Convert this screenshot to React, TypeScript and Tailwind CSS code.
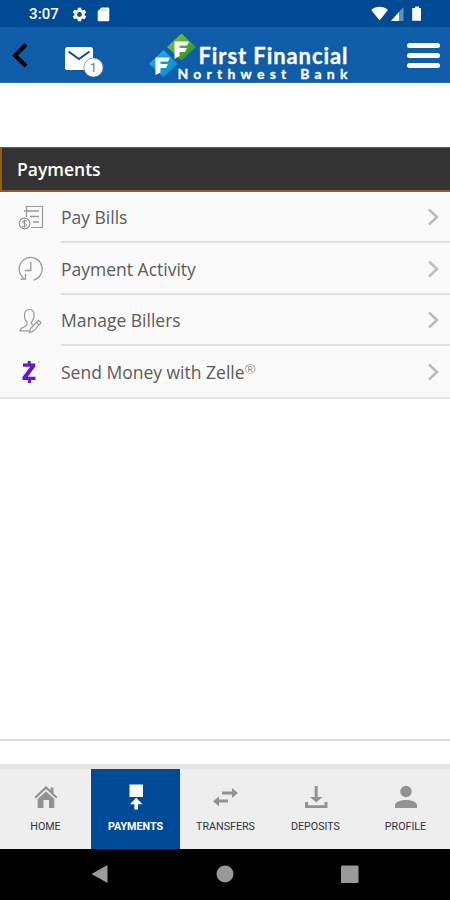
import React from "react";

function StatusBar() {
  return (
    <div className="flex h-[27px] shrink-0 items-center bg-[#004a94] pl-[29px] pr-[28px] text-white">
      <span className="mt-[2px] w-[30px] whitespace-nowrap font-[Roboto,sans-serif] text-[15px] font-medium leading-none tracking-[0.1px]">3:07</span>
      <svg className="ml-[12px] mt-px h-[17px] w-[17px]" viewBox="0 0 24 24" fill="currentColor">
        <path d="M19.14 12.94c.04-.3.06-.61.06-.94 0-.32-.02-.64-.07-.94l2.03-1.58a.49.49 0 0 0 .12-.61l-1.92-3.32a.49.49 0 0 0-.59-.22l-2.39.96a7 7 0 0 0-1.62-.94l-.36-2.54a.48.48 0 0 0-.48-.41h-3.84a.47.47 0 0 0-.47.41l-.36 2.54c-.59.24-1.13.57-1.62.94l-2.39-.96a.48.48 0 0 0-.59.22L2.74 8.87a.48.48 0 0 0 .12.61l2.03 1.58a7 7 0 0 0 0 1.88l-2.03 1.58a.49.49 0 0 0-.12.61l1.92 3.32c.12.22.37.29.59.22l2.39-.96c.5.38 1.03.7 1.62.94l.36 2.54c.05.24.24.41.48.41h3.84c.24 0 .44-.17.47-.41l.36-2.54a7 7 0 0 0 1.62-.94l2.39.96c.22.08.47 0 .59-.22l1.92-3.32a.47.47 0 0 0-.12-.61zM12 15.4a3.4 3.4 0 1 1 0-6.8 3.4 3.4 0 0 1 0 6.8z" />
      </svg>
      <svg className="ml-[9px] mt-px h-[15px] w-[13px]" viewBox="0 0 13 15">
        <path d="M4.5.5H11A1.3 1.3 0 0 1 12.300 1.800V13A1.300 1.300 0 0 1 11 14.300H2A1.300 1.300 0 0 1 .7 13V4.300z" fill="#fff" />
        <path d="M4.800 2.200V4M7 2.200V4M9.200 2.200V4" stroke="#9db6d6" strokeWidth="1" />
      </svg>
      <svg className="ml-auto h-[16px] w-[51px]" viewBox="0 0 51 16">
        <path d="M.3 4C5-.3 12-.3 16.900 4L8.600 14.500z" fill="#fff" />
        <path d="M20 15 32.500 1V15z" fill="#5f8dbe" />
        <path d="M20 15 28 6V15z" fill="#fff" />
        <path d="M44.200.5H48V2h2V14.800H41.200V2h3z" fill="#fff" />
      </svg>
    </div>
  );
}

function Logo() {
  return (
    <svg className="ml-[44px] h-[54px] w-[202px]" viewBox="0 0 202 54">
      <defs>
        <linearGradient id="green" x1="0" x2="1" y1="0" y2="1">
          <stop offset="0" stopColor="#8ac63f" />
          <stop offset=".5" stopColor="#55ad35" />
          <stop offset="1" stopColor="#12803a" />
        </linearGradient>
        <linearGradient id="blue" x1="0" x2="1" y1="0" y2="1">
          <stop offset="0" stopColor="#20b5ee" />
          <stop offset="1" stopColor="#0585cf" />
        </linearGradient>
      </defs>
      <path d="M14.500 21 29 35 14.500 48 0 35z" fill="url(#blue)" />
      <path d="M32.500 4.500 47 18 32.500 31.500 18 18z" fill="url(#green)" />
      <path d="M6.500 46V28.500H21L19 32.500H11.500V35H19L17 39H11.500V43.500z" fill="#fff" />
      <path d="M25.500 30V12.500H40L38 16.500H30.500V19H38L36 23H30.500V27z" fill="#fff" />
      <text x="49.500" y="35" textLength="149" fill="#fff" stroke="#fff" strokeWidth=".3" className="font-[Lato,sans-serif] text-[22px] font-bold">First Financial</text>
      <text x="28.500" y="49.500" textLength="170" fill="#fff" stroke="#fff" strokeWidth=".3" className="font-[Lato,sans-serif] text-[14px] font-bold">Northwest Bank</text>
    </svg>
  );
}

function Header() {
  return (
    <header className="flex h-[56px] shrink-0 items-start border-b border-[#356eb0] bg-[#0f5ca8]">
      <svg className="ml-[10px] mt-[15px] h-[27px] w-[19px]" viewBox="0 0 19 27" fill="none" stroke="#000" strokeWidth="4">
        <path d="M16 2.500 5 13.500 16 24" />
      </svg>
      <svg className="ml-[35px] mt-[19px] h-[32px] w-[41px]" viewBox="0 0 41 32">
        <rect x="1" y="1" width="28" height="23" rx="2.500" fill="#fff" />
        <path d="M4.500 5.500 15 13 25.500 5.500" fill="none" stroke="#0f4d92" strokeWidth="2" />
        <circle cx="29.500" cy="21.500" r="9.600" fill="#fff" stroke="#55779f" strokeWidth=".7" />
        <text x="29.300" y="26" textAnchor="middle" fill="#777" className="font-[Roboto,sans-serif] text-[12px]">1</text>
      </svg>
      <div className="mt-[2px]"><Logo /></div>
      <div className="ml-auto mr-[10px] mt-[16px] flex w-[33px] flex-col gap-[5px]">
        <span className="h-[5px] rounded-full bg-white" />
        <span className="h-[5px] rounded-full bg-white" />
        <span className="h-[5px] rounded-full bg-white" />
      </div>
    </header>
  );
}

const BillIcon = () => (
  <svg className="h-[26px] w-[26px]" viewBox="0 0 26 26" fill="none" stroke="#999" strokeWidth="1.2">
    <path d="M8.500 12V1.500H24.500V22.500H13" />
    <path d="M11 6H21M12 11.500H21M15 17H21M6 6H11" strokeWidth="1.700" />
    <circle cx="6.500" cy="18.500" r="5.300" />
    <path d="M9 16.200C7.800 15 4.300 15.300 4.500 17 4.600 18.600 8.700 18.300 8.700 20.200 8.600 21.900 5.200 22 4 20.700M6.500 14.500V22.500" strokeWidth="1" />
  </svg>
);
const ClockIcon = () => (
  <svg className="h-[26px] w-[26px]" viewBox="0 0 26 26" fill="none" stroke="#999" strokeWidth="1.300">
    <path d="M5.500 22A11.500 11.500 0 1 1 12.500 24.500" strokeDasharray="61 3 8 2" />
    <path d="M12.800 6V14.500H7M2.500 23H7.500V18" />
  </svg>
);
const BillerIcon = () => (
  <svg className="h-[26px] w-[26px]" viewBox="0 0 26 26" fill="none" stroke="#999" strokeWidth="1.200">
    <path d="M9 14C6.500 12 6.300 9.500 6.600 6 7 2.800 8.500 1.500 11.300 1.500S15.800 2.800 16 6C16.200 9.500 15.500 12 13.500 14V16L15.500 17M9 14V16C8.500 20 2 18.500 2 22.800H11" />
    <path d="M11.500 24.500 12.500 20.500 20.500 12.300 23 14.800 15.200 23.300zM18.500 14.300 21 16.800" />
  </svg>
);
const ZelleIcon = () => (
  <svg className="h-[26px] w-[26px]" viewBox="0 0 26 26" fill="#6517d0">
    <path d="M5 4.500H9.700V2H12.700V4.500H17.300V7.500L9.800 17.800H17.500V21H13V24H10V21H4.500V18L12.200 7.800H5z" />
    <circle cx="20.700" cy="3" r=".8" fill="#b7a0e0" />
  </svg>
);

const rows = [
  { Icon: BillIcon, label: "Pay Bills", height: "h-[51px]" },
  { Icon: ClockIcon, label: "Payment Activity", height: "h-[52px]" },
  { Icon: BillerIcon, label: "Manage Billers", height: "h-[51px]" },
  { Icon: ZelleIcon, label: "Send Money with Zelle", height: "h-[51px]", mark: true },
];

function Menu() {
  return (
    <section className="bg-[#fafafa]">
      <h1 className="flex h-[45px] items-center border-b-2 border-l-2 border-t border-b-[#8c601f] border-l-[#9a5c0a] border-t-[#715a40] bg-[#333] pl-[15px] font-['Open_Sans',sans-serif] text-[17.5px] font-semibold text-white">
        Payments
      </h1>
      <ul className="border-b-2 border-[#e5e5e5]">
        {rows.map(({ Icon, label, height, mark }, i) => (
          <li key={label} className={`flex ${height} pl-[18px]`}>
            <span className="flex w-[43px] items-center"><Icon /></span>
            <div className={`flex flex-1 items-center justify-between pr-[10px] pt-px ${i < 3 ? "border-b-2 border-[#e0e0e0]" : ""}`}>
              <span className="font-['Open_Sans',sans-serif] text-[17.5px] leading-[24px] text-[#5a5a5a]">
                {label}
                {mark && <sup className="-top-[5px] text-[13.5px] font-light">®</sup>}
              </span>
              <svg className="h-[18px] w-[14px]" viewBox="0 0 14 18" fill="none" stroke="#bcbcbc" strokeWidth="2.500">
                <path d="M3 1.500 11 9 3 16.500" />
              </svg>
            </div>
          </li>
        ))}
      </ul>
    </section>
  );
}

const HomeIcon = () => (
  <svg className="h-[28px] w-[28px]" viewBox="0 0 28 28" fill="#929292">
    <path d="M14 3 2.500 14 4 15.500 14 6 24 15.500 25.500 14 21.500 10.200V4.500H18.500V7.300z" />
    <path d="M5.700 16 14 8.200 22.300 16V25H17V17H11.500V25H5.700z" />
  </svg>
);
const PayIcon = () => (
  <svg className="h-[28px] w-[28px]" viewBox="0 0 28 28" fill="#fff">
    <path d="M7.500 1.500H21V14H7.500zM14.200 14.800 20.500 21.300H16V26.500H12.400V21.300H8z" />
  </svg>
);
const TransferIcon = () => (
  <svg className="h-[28px] w-[28px]" viewBox="0 0 28 28" fill="#929292">
    <path d="M10 8.500H20V5L26 10 20 15V11.500H10zM16 16.500H7V13.500L1 18.300 7 23.200V19.500H16z" />
  </svg>
);
const DepositIcon = () => (
  <svg className="h-[28px] w-[28px]" viewBox="0 0 28 28" fill="#929292">
    <path d="M12.700 3H15.700V14H20.500L14.200 19.500 8 14H12.700zM3 19H6V22.300H22.500V19H25.500V25H3z" />
  </svg>
);
const ProfileIcon = () => (
  <svg className="h-[28px] w-[28px]" viewBox="0 0 28 28" fill="#929292">
    <circle cx="14" cy="8.500" r="5.700" />
    <path d="M3 25V22.500C3 18.500 9 17 14 17S25 18.500 25 22.500V25z" />
  </svg>
);

const tabs = [
  { Icon: HomeIcon, label: "HOME" },
  { Icon: PayIcon, label: "PAYMENTS", active: true },
  { Icon: TransferIcon, label: "TRANSFERS" },
  { Icon: DepositIcon, label: "DEPOSITS" },
  { Icon: ProfileIcon, label: "PROFILE" },
];

export default function App() {
  return (
    <main className="flex h-[900px] w-[450px] flex-col overflow-hidden bg-white">
      <StatusBar />
      <Header />
      <div className="h-[64px] shrink-0" />
      <Menu />
      <div className="flex-1" />
      <div className="h-[25px] shrink-0 border-t-2 border-[#dedede]" />
      <nav className="grid h-[85px] shrink-0 grid-cols-5 border-t-[5px] border-[#e5e5e5] bg-[#eee]">
        {tabs.map(({ Icon, label, active }) => (
          <div key={label} className={`flex flex-col items-center pt-[14px] ${active ? "ml-px bg-[#004b98] text-white" : "pl-px text-[#333]"}`}>
            <Icon />
            <span className={`mt-[10px] font-[Roboto,sans-serif] text-[10.7px] leading-[12px] ${active ? "font-bold" : "font-normal"}`}>{label}</span>
          </div>
        ))}
      </nav>
      <footer className="flex h-[51px] shrink-0 items-center justify-center bg-black">
        <svg className="h-[20px] w-[268px]" viewBox="0 0 268 20" fill="#999">
          <path d="M.5 9 16.500 0V18z" />
          <circle cx="134" cy="9" r="8.500" />
          <rect x="250" y=".5" width="17.500" height="17.500" rx="1" />
        </svg>
      </footer>
    </main>
  );
}
